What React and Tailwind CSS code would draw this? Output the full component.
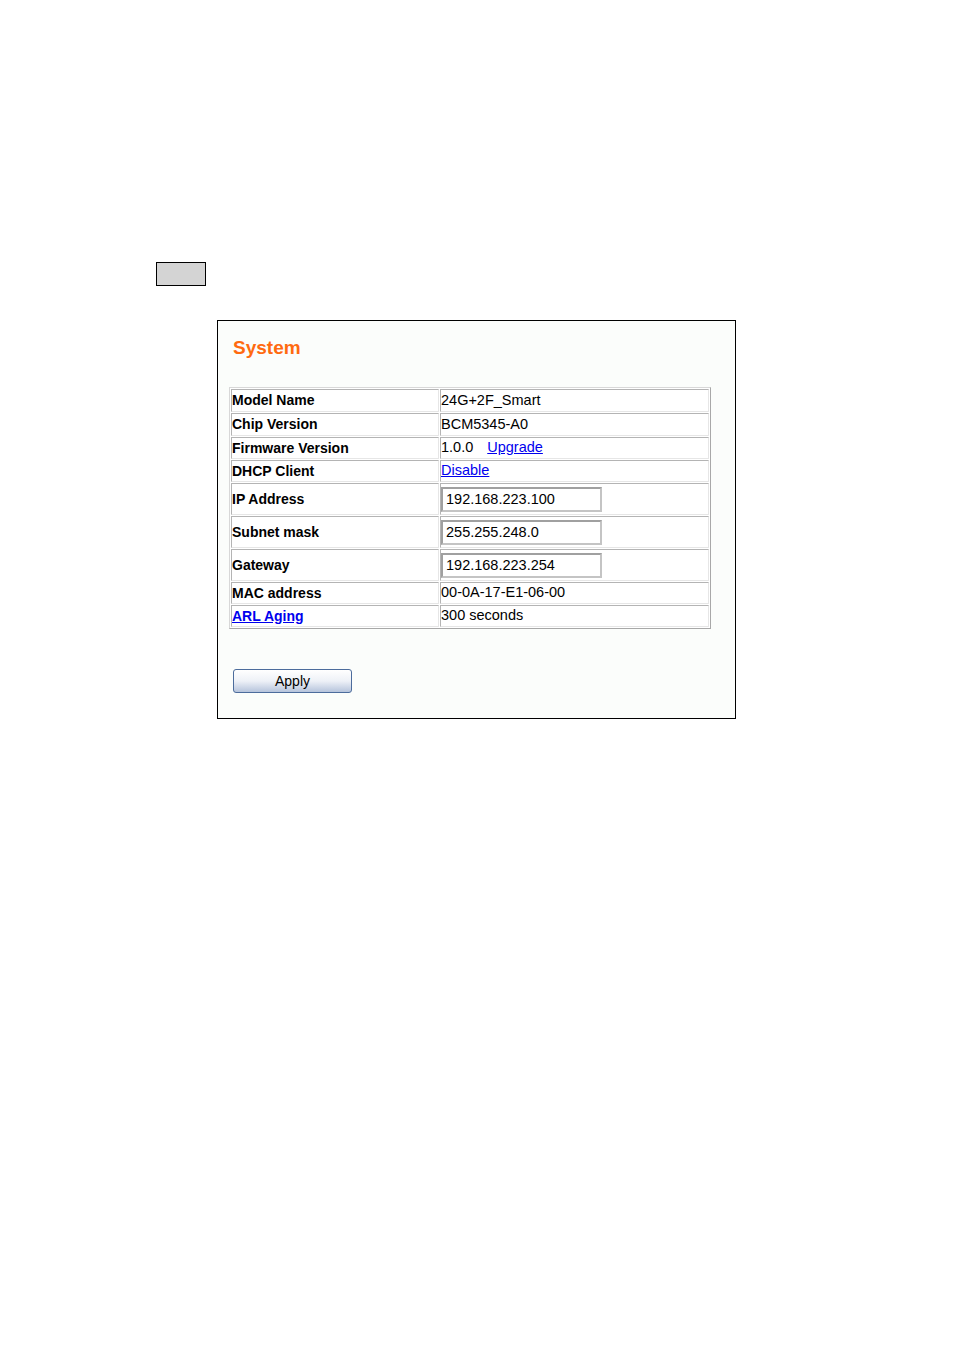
const rows = [
  { label: 'Model Name', value: '24G+2F_Smart', h: 'h-[21px]' },
  { label: 'Chip Version', value: 'BCM5345-A0', h: 'h-[21px]' },
  { label: 'Firmware Version', value: '1.0.0', link: 'Upgrade', h: 'h-[20px]' },
  { label: 'DHCP Client', onlyLink: 'Disable', h: 'h-[20px]' },
  { label: 'IP Address', input: '192.168.223.100', h: 'h-[30px]' },
  { label: 'Subnet mask', input: '255.255.248.0', h: 'h-[30px]' },
  { label: 'Gateway', input: '192.168.223.254', h: 'h-[30px]' },
  { label: 'MAC address', value: '00-0A-17-E1-06-00', h: 'h-[20px]' },
  { label: 'ARL Aging', value: '300 seconds', labelLink: true, h: 'h-[20px]' },
];

const cell = 'p-0 align-middle border border-t-[#b4b4b4] border-l-[#b4b4b4] border-b-[#e6e6e6] border-r-[#e6e6e6]';

export default function App() {
  return (
    <div className="min-h-[1351px] w-[954px] bg-white font-['Liberation_Sans',Arial,sans-serif] text-black">
      <div className="pt-[262px] pl-[156px]">
        <div className="w-[50px] h-[24px] bg-[#d4d4d4] border border-black" />
      </div>

      <div className="mt-[34px] ml-[217px] w-[519px] h-[399px] border border-black bg-[#fbfdfb] px-[11px] pt-[16px]">
        <h1 className="ml-[4px] text-[19px] leading-[22px] font-bold text-[#ff6a10]">System</h1>

        <table className="mt-[28px] w-[482px] border-separate [border-spacing:1px] border border-t-[#d8d8d8] border-l-[#d8d8d8] border-b-[#a8a8a8] border-r-[#a8a8a8] bg-white">
          <tbody>
            {rows.map((r) => (
              <tr key={r.label}>
                <td className={`${cell} w-[208px]`}>
                  <div className={`${r.h} flex items-center text-[14px] font-bold`}>
                    {r.labelLink ? (
                      <a href="#" className="text-[#0000ee] underline">{r.label}</a>
                    ) : (
                      r.label
                    )}
                  </div>
                </td>
                <td className={cell}>
                  <div className={`${r.h} flex items-center text-[14.5px]`}>
                    {r.value && <span>{r.value}</span>}
                    {r.link && (
                      <a href="#" className="ml-[14px] text-[#0000ee] underline">{r.link}</a>
                    )}
                    {r.onlyLink && (
                      <a href="#" className="text-[#0000ee] underline">{r.onlyLink}</a>
                    )}
                    {r.input && (
                      <input
                        readOnly
                        value={r.input}
                        className="w-[161px] h-[25px] border-2 border-t-[#a0a0a0] border-l-[#a0a0a0] border-b-[#c4c4c4] border-r-[#c4c4c4] bg-white pl-[3px] text-[14.5px] outline-none"
                      />
                    )}
                  </div>
                </td>
              </tr>
            ))}
          </tbody>
        </table>

        <button className="mt-[40px] ml-[4px] w-[119px] h-[24px] rounded-[3px] border border-[#4c6c9c] bg-gradient-to-b from-white via-[#eef1f7] to-[#b6c4dc] text-[14px] leading-none text-black">
          Apply
        </button>
      </div>
    </div>
  );
}
